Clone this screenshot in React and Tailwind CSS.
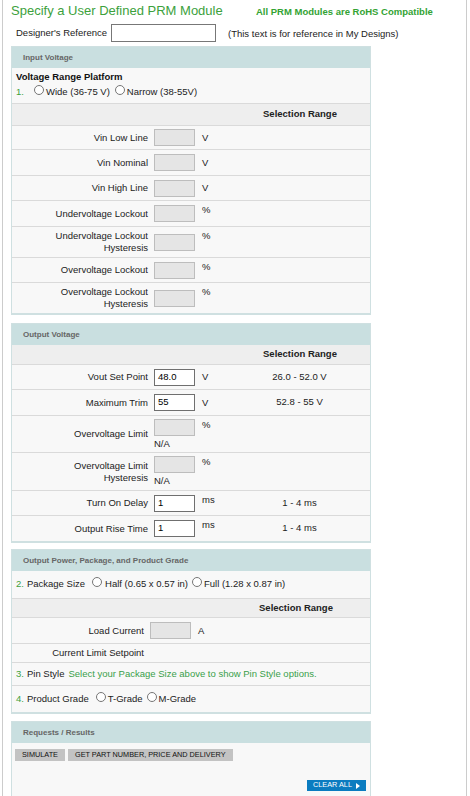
import React from 'react';

// small helpers for the configurator form
function Radio() {
  return <span className="inline-block w-[10px] h-[10px] rounded-full border border-[#767676] bg-white shrink-0" />;
}

function Box({ value }) {
  if (value === undefined) {
    return <div className="w-[41px] h-[17px] bg-[#e5e5e5] border border-[#bdbdbd] shrink-0" />;
  }
  return (
    <div className="w-[41px] h-[17px] bg-white border border-[#6f6f6f] pl-[3px] flex items-center text-black shrink-0">
      {value}
    </div>
  );
}

function Section({ title, children }) {
  return (
    <div className="w-[360px] border border-b-2 border-[#cfe0e1] bg-[#f8f8f8]">
      <div className="h-[21px] bg-[#c9dfe0] pl-[11px] flex items-center text-[8px] font-bold text-[#666]">
        {title}
      </div>
      {children}
    </div>
  );
}

function RangeHead({ h, narrow }) {
  return (
    <div className={`flex items-center bg-[#eeeeee] border-t border-[#dadada] ${h}`}>
      <div className={narrow ? 'w-[210px]' : 'w-[218px]'} />
      <div className="flex-1 text-center font-bold text-[#222]">Selection Range</div>
    </div>
  );
}

// one labelled input row; "%" and "ms" units sit at the top of their cell
function Field({ label, value, unit, range, top, na, h, narrow }) {
  return (
    <div className={`flex items-center border-t border-[#dadada] ${h}`}>
      <div className={`${narrow ? 'w-[132px]' : 'w-[136px]'} text-right leading-[12px]`}>{label}</div>
      <div className="ml-[6px] flex flex-col">
        <Box value={value} />
        {na && <div className="leading-[12px] pt-[2px]">N/A</div>}
      </div>
      <div className={`ml-[7px] leading-[12px] ${top ? 'self-start pt-[3px]' : ''}`}>{unit}</div>
      <div className="flex-1" />
      <div className={`${narrow ? 'w-[148px]' : 'w-[141px]'} text-center`}>{range}</div>
    </div>
  );
}

export default function App() {
  return (
    <div className="bg-white font-['Liberation_Sans',Arial,sans-serif] text-[9.5px] text-[#222]">
      <div className="ml-[2px] w-[465px] border-x border-[#cccccc] pl-[8px] pt-[3px] pb-[6px]">
        {/* title */}
        <div className="flex items-baseline leading-[15px]">
          <div className="w-[245px] text-[13px] text-[#3ca13c]">Specify a User Defined PRM Module</div>
          <div className="font-bold text-[#33a333]">All PRM Modules are RoHS Compatible</div>
        </div>

        <div className="mt-[5px] ml-[5px] flex items-center">
          <div className="w-[95px]">Designer's Reference</div>
          <div className="w-[105px] h-[18px] border border-[#777] bg-white" />
          <div className="ml-[12px] mt-[3px]">(This text is for reference in My Designs)</div>
        </div>

        {/* input voltage */}
        <div className="mt-[4px]">
          <Section title="Input Voltage">
            <div className="pl-[4px] pt-[2px] pb-[3px]">
              <div className="leading-[14px] font-bold text-[#111]">Voltage Range Platform</div>
              <div className="flex items-center h-[16px]">
                <span className="text-[#3ca13c]">1.</span>
                <span className="ml-[10px]"><Radio /></span>
                <span className="ml-[2px]">Wide (36-75 V)</span>
                <span className="ml-[5px]"><Radio /></span>
                <span className="ml-[2px]">Narrow (38-55V)</span>
              </div>
            </div>
            <RangeHead h="h-[22px]" />
            <Field label="Vin Low Line" unit="V" h="h-[24px]" />
            <Field label="Vin Nominal" unit="V" h="h-[26px]" />
            <Field label="Vin High Line" unit="V" h="h-[25px]" />
            <Field label="Undervoltage Lockout" unit="%" top h="h-[26px]" />
            <Field label={<>Undervoltage Lockout<br />Hysteresis</>} unit="%" top h="h-[31px]" />
            <Field label="Overvoltage Lockout" unit="%" top h="h-[25px]" />
            <Field label={<>Overvoltage Lockout<br />Hysteresis</>} unit="%" top h="h-[31px]" />
          </Section>
        </div>

        {/* output voltage */}
        <div className="mt-[8px]">
          <Section title="Output Voltage">
            <div className="flex items-center h-[19px] bg-[#eeeeee]">
              <div className="w-[218px]" />
              <div className="flex-1 text-center font-bold text-[#222]">Selection Range</div>
            </div>
            <Field label="Vout Set Point" value="48.0" unit="V" range="26.0 - 52.0 V" h="h-[25px]" />
            <Field label="Maximum Trim" value="55" unit="V" range="52.8 - 55 V" h="h-[26px]" />
            <Field label="Overvoltage Limit" unit="%" top na h="h-[37px]" />
            <Field label={<>Overvoltage Limit<br />Hysteresis</>} unit="%" top na h="h-[38px]" />
            <Field label="Turn On Delay" value="1" unit="ms" top range="1 - 4 ms" h="h-[25px]" />
            <Field label="Output Rise Time" value="1" unit="ms" top range="1 - 4 ms" h="h-[26px]" />
          </Section>
        </div>

        {/* power, package, grade */}
        <div className="mt-[6px]">
          <Section title="Output Power, Package, and Product Grade">
            <div className="flex items-center h-[27px] pl-[4px]">
              <span className="text-[#3ca13c]">2.</span>
              <span className="ml-[3px]">Package Size</span>
              <span className="ml-[7px]"><Radio /></span>
              <span className="ml-[3px]">Half (0.65 x 0.57 in)</span>
              <span className="ml-[4px]"><Radio /></span>
              <span className="ml-[2px]">Full (1.28 x 0.87 in)</span>
            </div>
            <RangeHead h="h-[19px]" narrow />
            <Field label="Load Current" unit="A" narrow h="h-[26px]" />
            <div className="flex items-center h-[19px] border-t border-[#dadada]">
              <div className="w-[132px] text-right">Current Limit Setpoint</div>
            </div>
            <div className="flex items-center h-[23px] border-t border-[#dadada] pl-[4px]">
              <span className="text-[#3ca13c]">3.</span>
              <span className="ml-[3px]">Pin Style</span>
              <span className="ml-[4px] text-[#3a9f4a]">Select your Package Size above to show Pin Style options.</span>
            </div>
            <div className="flex items-center h-[27px] border-t border-[#dadada] pl-[4px]">
              <span className="text-[#3ca13c]">4.</span>
              <span className="ml-[3px]">Product Grade</span>
              <span className="ml-[7px]"><Radio /></span>
              <span className="ml-[2px]">T-Grade</span>
              <span className="ml-[4px]"><Radio /></span>
              <span className="ml-[2px]">M-Grade</span>
            </div>
          </Section>
        </div>

        {/* requests */}
        <div className="mt-[7px]">
          <Section title="Requests / Results">
            <div className="h-[55px] px-[3px] pt-[6px] flex flex-col">
              <div className="flex gap-[3px]">
                <button className="h-[12px] px-[7px] bg-[#c3c3c3] text-[7.3px] text-[#111] leading-[12px]">SIMULATE</button>
                <button className="h-[12px] px-[7px] bg-[#c3c3c3] text-[7.3px] text-[#111] leading-[12px]">
                  GET PART NUMBER, PRICE AND DELIVERY
                </button>
              </div>
              <div className="mt-[19px] flex justify-end pr-[1px]">
                <button className="h-[11px] w-[59px] bg-[#0b7cc0] text-white text-[7.3px] flex items-center justify-center gap-[4px]">
                  CLEAR ALL
                  <span className="inline-block w-0 h-0 border-y-[3px] border-y-transparent border-l-[4px] border-l-white" />
                </button>
              </div>
            </div>
          </Section>
        </div>
      </div>
    </div>
  );
}
